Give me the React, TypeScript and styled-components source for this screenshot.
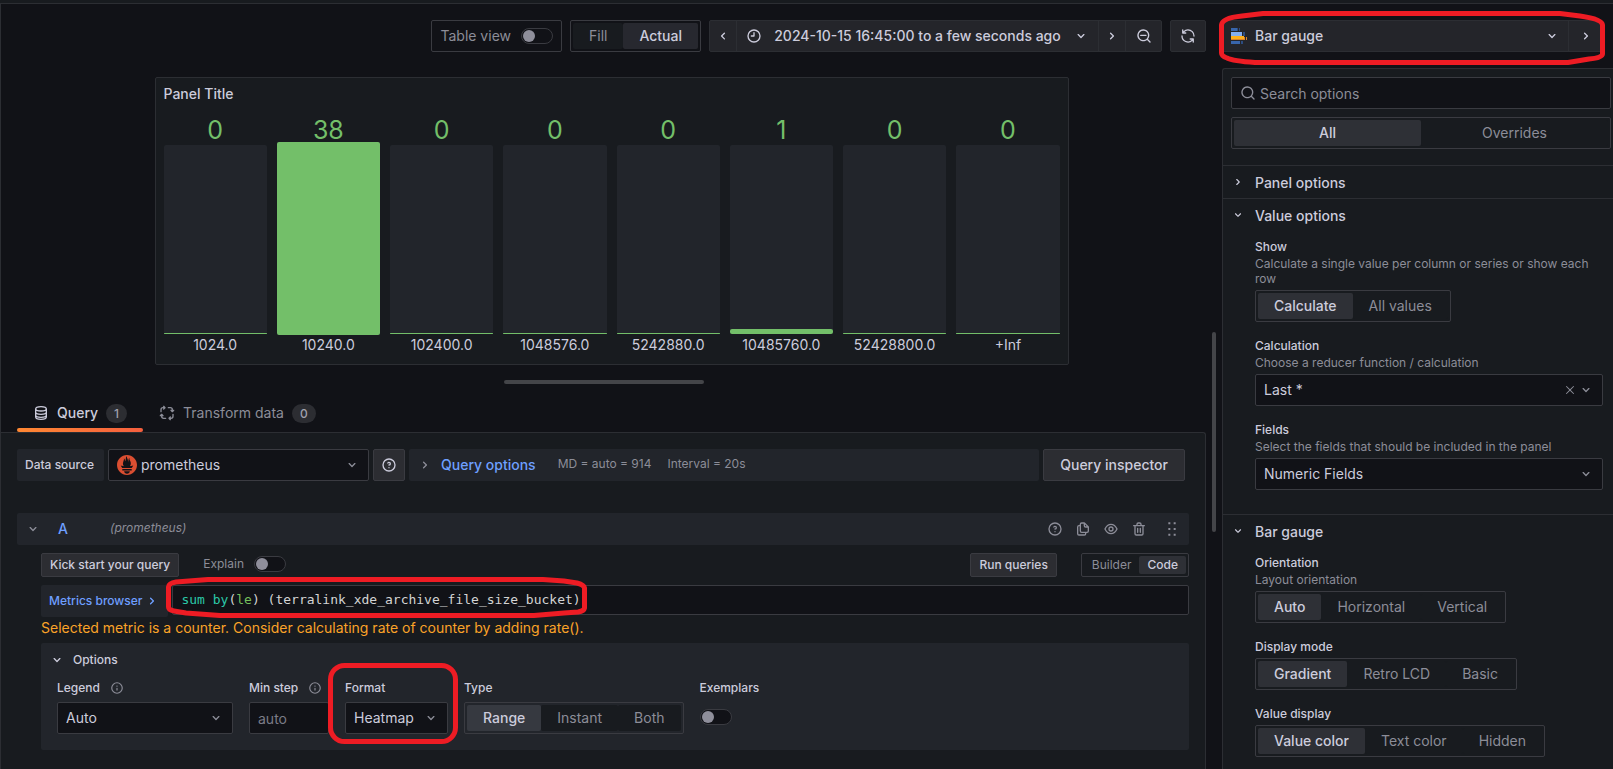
import React, { useState } from 'react';
import styled, { createGlobalStyle, css } from 'styled-components';
import { SiPrometheus } from 'react-icons/si';

const color = {
  canvas: '#111217',
  primary: '#181b1f',
  secondary: '#22252b',
  toolbar: '#24252a',
  line: '#2c2e33',
  border: '#3a3b41',
  text: '#ccccdc',
  muted: '#8c8d98',
  link: '#6e9fff',
  green: '#73bf69',
  fill: 'rgba(204, 204, 220, 0.12)',
  mark: '#ee1c24',
};

const GlobalStyle = createGlobalStyle`
  *, *::before, *::after { box-sizing: border-box; }
  body {
    margin: 0;
    background: ${color.canvas};
    color: ${color.text};
    font-family: Inter, "Liberation Sans", sans-serif;
    font-size: 14px;
    line-height: 22px;
  }
  button, input, select, textarea { font: inherit; color: inherit; margin: 0; }
  button { cursor: pointer; }
`;

/* ---------- icons ---------- */

const paths = {
  down: 'M17,9.17a1,1,0,0,0-1.41,0L12,12.71,8.46,9.17a1,1,0,0,0-1.41,0,1,1,0,0,0,0,1.42l4.24,4.24a1,1,0,0,0,1.42,0L17,10.59A1,1,0,0,0,17,9.17Z',
  right: 'M14.83,11.29,10.59,7.05a1,1,0,0,0-1.42,0,1,1,0,0,0,0,1.41L12.71,12,9.17,15.54a1,1,0,0,0,0,1.41,1,1,0,0,0,.71.29,1,1,0,0,0,.71-.29l4.24-4.24A1,1,0,0,0,14.83,11.29Z',
  left: 'M11.29,12l3.54-3.54a1,1,0,0,0,0-1.41,1,1,0,0,0-1.42,0L9.17,11.29a1,1,0,0,0,0,1.42L13.41,17a1,1,0,0,0,.71.29,1,1,0,0,0,.71-.29,1,1,0,0,0,0-1.41Z',
  clock: 'M12,2A10,10,0,1,0,22,12,10,10,0,0,0,12,2Zm0,18a8,8,0,1,1,8-8A8,8,0,0,1,12,20ZM12,6a1,1,0,0,0-1,1v4H8a1,1,0,0,0,0,2h4a1,1,0,0,0,1-1V7A1,1,0,0,0,12,6Z',
  search: 'M21.71,20.29,18,16.61A9,9,0,1,0,16.61,18l3.68,3.68a1,1,0,0,0,1.42,0A1,1,0,0,0,21.71,20.29ZM11,18a7,7,0,1,1,7-7A7,7,0,0,1,11,18Z',
  zoomOut: 'M21.71,20.29,18,16.61A9,9,0,1,0,16.61,18l3.68,3.68a1,1,0,0,0,1.42,0A1,1,0,0,0,21.71,20.29ZM11,18a7,7,0,1,1,7-7A7,7,0,0,1,11,18Zm4-8H7a1,1,0,0,0,0,2h8a1,1,0,0,0,0-2Z',
  sync: 'M19.91,15.51H15.38a1,1,0,0,0,0,2h2.4A8,8,0,0,1,4,12a1,1,0,0,0-2,0,10,10,0,0,0,16.88,7.23V21a1,1,0,0,0,2,0V16.5A1,1,0,0,0,19.91,15.51ZM12,2A10,10,0,0,0,5.12,4.77V3a1,1,0,0,0-2,0V7.5a1,1,0,0,0,1,1h4.5a1,1,0,0,0,0-2H6.22A8,8,0,0,1,20,12a1,1,0,0,0,2,0A10,10,0,0,0,12,2Z',
  help: 'M11.29,15.29a1.58,1.58,0,0,0-.12.15.76.76,0,0,0-.09.18.64.64,0,0,0-.06.18,1.36,1.36,0,0,0,0,.2.84.84,0,0,0,.08.38.9.9,0,0,0,.54.54.94.94,0,0,0,.76,0,.9.9,0,0,0,.54-.54A1,1,0,0,0,13,16a1,1,0,0,0-.29-.71A1,1,0,0,0,11.29,15.29ZM12,2A10,10,0,1,0,22,12,10,10,0,0,0,12,2Zm0,18a8,8,0,1,1,8-8A8,8,0,0,1,12,20ZM12,7A3,3,0,0,0,9.4,8.5a1,1,0,1,0,1.73,1A1,1,0,0,1,12,9a1,1,0,0,1,0,2,1,1,0,1,0,0,2,3,3,0,0,0,0-6Z',
  info: 'M12,2A10,10,0,1,0,22,12,10,10,0,0,0,12,2Zm0,18a8,8,0,1,1,8-8A8,8,0,0,1,12,20Zm0-8.5a1,1,0,0,0-1,1v3a1,1,0,0,0,2,0v-3A1,1,0,0,0,12,11.5Zm0-4a1.25,1.25,0,1,0,1.25,1.25A1.25,1.25,0,0,0,12,7.5Z',
  copy: 'M21,8.94a1.31,1.31,0,0,0-.06-.27l0-.09a1.07,1.07,0,0,0-.19-.28h0l-6-6h0a1.07,1.07,0,0,0-.28-.19.32.32,0,0,0-.09,0A.88.88,0,0,0,14.05,2H10A3,3,0,0,0,7,5V6H6A3,3,0,0,0,3,9V19a3,3,0,0,0,3,3h8a3,3,0,0,0,3-3V18h1a3,3,0,0,0,3-3V9S21,9,21,8.94ZM15,5.41,17.59,8H16a1,1,0,0,1-1-1ZM15,19a1,1,0,0,1-1,1H6a1,1,0,0,1-1-1V9A1,1,0,0,1,6,8H7v7a3,3,0,0,0,3,3h5Zm4-4a1,1,0,0,1-1,1H10a1,1,0,0,1-1-1V5a1,1,0,0,1,1-1h3V7a3,3,0,0,0,3,3h3Z',
  eye: 'M21.92,11.6C19.9,6.91,16.1,4,12,4S4.1,6.91,2.08,11.6a1,1,0,0,0,0,.8C4.1,17.09,7.9,20,12,20s7.9-2.91,9.92-7.6A1,1,0,0,0,21.92,11.6ZM12,18c-3.17,0-6.17-2.29-7.9-6C5.83,8.29,8.83,6,12,6s6.17,2.29,7.9,6C18.17,15.71,15.17,18,12,18ZM12,8a4,4,0,1,0,4,4A4,4,0,0,0,12,8Zm0,6a2,2,0,1,1,2-2A2,2,0,0,1,12,14Z',
  trash: 'M10,18a1,1,0,0,0,1-1V11a1,1,0,0,0-2,0v6A1,1,0,0,0,10,18ZM20,6H16V5a3,3,0,0,0-3-3H11A3,3,0,0,0,8,5V6H4A1,1,0,0,0,4,8H5V19a3,3,0,0,0,3,3h8a3,3,0,0,0,3-3V8h1a1,1,0,0,0,0-2ZM10,5a1,1,0,0,1,1-1h2a1,1,0,0,1,1,1V6H10Zm7,14a1,1,0,0,1-1,1H8a1,1,0,0,1-1-1V8H17Zm-3-1a1,1,0,0,0,1-1V11a1,1,0,0,0-2,0v6A1,1,0,0,0,14,18Z',
  times: 'M13.41,12l6.3-6.29a1,1,0,1,0-1.42-1.42L12,10.59,5.71,4.29A1,1,0,0,0,4.29,5.71L10.59,12l-6.3,6.29a1,1,0,1,0,1.42,1.42L12,13.41l6.29,6.3a1,1,0,0,0,1.42-1.42Z',
  drag: 'M6.5,2h3v3h-3ZM14.5,2h3v3h-3ZM6.5,10.5h3v3h-3ZM14.5,10.5h3v3h-3ZM6.5,19h3v3h-3ZM14.5,19h3v3h-3Z',
};

const Svg = styled.svg`
  flex: none;
  display: block;
  fill: currentColor;
`;

function Icon({ name, size = 16 }: { name: keyof typeof paths; size?: number }) {
  return (
    <Svg width={size} height={size} viewBox="0 0 24 24" aria-hidden="true">
      <path d={paths[name]} />
    </Svg>
  );
}

const LineSvg = styled(Svg)`
  fill: none;
  stroke: currentColor;
  stroke-width: 2;
  stroke-linecap: round;
  stroke-linejoin: round;
`;

function DatabaseIcon() {
  return (
    <LineSvg width="16" height="16" viewBox="0 0 24 24" aria-hidden="true">
      <path d="M4 6c0-2 3-3.500 8-3.500S20 4 20 6v12c0 2-3 3.500-8 3.500S4 20 4 18ZM4 6c0 2 3 3 8 3s8-1 8-3M4 11c0 2 3 3 8 3s8-1 8-3M4 15.500c0 2 3 3 8 3s8-1 8-3" />
    </LineSvg>
  );
}

function TransformIcon() {
  return (
    <LineSvg width="16" height="16" viewBox="0 0 24 24" aria-hidden="true">
      <path d="M3 10V7a3 3 0 0 1 3-3h3M7 2l2 2-2 2M14 4h3a3 3 0 0 1 3 3v3M22 8l-2 2-2-2M21 14v3a3 3 0 0 1-3 3h-3M17 22l-2-2 2-2M10 20H7a3 3 0 0 1-3-3v-3M2 16l2-2 2 2" />
    </LineSvg>
  );
}

function BarGaugeIcon() {
  return (
    <Svg width="16" height="16" viewBox="0 0 16 16" aria-hidden="true">
      <path fill="#3865ab" d="M0 0h6v3H0zM0 13h9v3H0z" />
      <path fill="#2c4c80" d="M6 0h1v3H6zM8 0h1v3H8zM10 13h2v3h-2zM12 4h2v4h-2z" />
      <path fill="#84aff1" d="M0 4h11v4H0z" />
      <path fill="#ffb01a" d="M0 8h13v4H0z" />
      <path fill="#d9822b" d="M0 11h13v1H0zM13 9h1v3h-1zM15 9h1v3h-1z" />
    </Svg>
  );
}

/* ---------- shared controls ---------- */

const Switch = styled.input.attrs({ type: 'checkbox' })`
  appearance: none;
  flex: none;
  display: flex;
  align-items: center;
  width: 32px;
  height: 16px;
  padding: 0 1px;
  border: 1px solid ${color.border};
  border-radius: 8px;
  background: ${color.canvas};

  &::before {
    content: '';
    width: 12px;
    height: 12px;
    border-radius: 50%;
    background: #8f8f9b;
  }
  &:checked { justify-content: flex-end; }
`;

const Button = styled.button<{ $small?: boolean; $square?: boolean }>`
  flex: none;
  display: inline-flex;
  align-items: center;
  justify-content: center;
  height: ${(p) => (p.$small ? 24 : 32)}px;
  width: ${(p) => (p.$square ? '32px' : 'auto')};
  padding: 0 ${(p) => (p.$square ? 0 : p.$small ? 8 : 16)}px;
  font-size: ${(p) => (p.$small ? 12 : 14)}px;
  font-weight: 500;
  background: #2c2d32;
  border: 1px solid ${color.border};
  border-radius: 2px;
  white-space: nowrap;
`;

const Group = styled.fieldset<{ $wide?: boolean }>`
  display: ${(p) => (p.$wide ? 'flex' : 'inline-flex')};
  flex: none;
  min-width: 0;
  margin: 0;
  padding: 2px;
  border: 1px solid ${color.border};
  border-radius: 2px;
`;

const Choice = styled.label<{ $small?: boolean; $wide?: boolean }>`
  position: relative;
  display: flex;
  align-items: center;
  justify-content: center;
  flex: ${(p) => (p.$wide ? '1 1 0' : 'none')};
  height: ${(p) => (p.$small ? 18 : 26)}px;
  padding: 0 ${(p) => (p.$small ? 8 : 16)}px;
  font-size: ${(p) => (p.$small ? 12 : 14)}px;
  color: ${color.muted};
  background: ${color.primary};
  border-radius: 2px;
  white-space: nowrap;
  cursor: pointer;

  &:has(input:checked) {
    color: ${color.text};
    font-weight: 500;
    background: ${color.fill};
  }
  input {
    appearance: none;
    position: absolute;
    inset: 0;
    cursor: pointer;
  }
`;

interface RadioProps {
  label: string;
  options: string[];
  initial: string;
  small?: boolean;
  wide?: boolean;
}

function RadioGroup({ label, options, initial, small, wide }: RadioProps) {
  const [value, setValue] = useState(initial);
  return (
    <Group $wide={wide} aria-label={label}>
      {options.map((option) => (
        <Choice key={option} $small={small} $wide={wide}>
          <input type="radio" name={label} checked={value === option} onChange={() => setValue(option)} />
          {option}
        </Choice>
      ))}
    </Group>
  );
}

const SelectBox = styled.div<{ $width?: number }>`
  display: flex;
  align-items: center;
  gap: 4px;
  height: 32px;
  width: ${(p) => (p.$width ? `${p.$width}px` : '100%')};
  padding: 0 8px;
  color: ${color.muted};
  background: ${color.canvas};
  border: 1px solid ${color.border};
  border-radius: 2px;

  select {
    appearance: none;
    flex: 1;
    min-width: 0;
    padding: 0;
    border: 0;
    outline: 0;
    background: transparent;
    color: ${color.text};
  }
`;

const ClearButton = styled.button`
  display: flex;
  margin-right: -2px;
  padding: 0;
  border: 0;
  background: none;
  color: ${color.muted};
`;

interface SelectProps {
  id: string;
  value: string;
  width?: number;
  clearable?: boolean;
  icon?: React.ReactNode;
}

function Select({ id, value, width, clearable, icon }: SelectProps) {
  return (
    <SelectBox $width={width}>
      {icon}
      <select id={id}>
        <option>{value}</option>
      </select>
      {clearable && (
        <ClearButton aria-label="Clear value">
          <Icon name="times" size={12} />
        </ClearButton>
      )}
      <Icon name="down" />
    </SelectBox>
  );
}

/* Hand-drawn marker line around the parts to notice. */
const Marker = styled.svg<{ $inset: string }>`
  position: absolute;
  inset: ${(p) => p.$inset};
  overflow: visible;
  fill: none;
  stroke: ${color.mark};
  stroke-width: 5;
  stroke-linejoin: round;
  pointer-events: none;
`;

/* ---------- page frame ---------- */

const Page = styled.div`
  display: flex;
  flex-direction: column;
  height: 100vh;
  overflow: hidden;
`;

const TopStrip = styled.div`
  flex: none;
  height: 4px;
  background: ${color.primary};
  border-bottom: 1px solid ${color.line};
`;

const Workspace = styled.div`
  flex: 1;
  min-height: 0;
  display: flex;
  border-left: 1px solid ${color.line};
`;

const LeftPane = styled.main`
  flex: 1;
  min-width: 0;
  display: flex;
  flex-direction: column;
`;

const Splitter = styled.div<{ $vertical?: boolean }>`
  flex: none;
  display: flex;
  align-items: center;
  justify-content: center;
  ${(p) => (p.$vertical ? 'width: 16px; padding-top: 90px;' : 'height: 16px;')}

  &::before {
    content: '';
    border-radius: 4px;
    background: #444549;
    ${(p) => (p.$vertical ? 'width: 4px; height: 200px;' : 'width: 200px; height: 4px;')}
  }
`;

/* ---------- toolbar ---------- */

const Toolbar = styled.div`
  flex: none;
  display: flex;
  justify-content: flex-end;
  gap: 8px;
  padding: 16px 0 16px 16px;
`;

const TableView = styled.label`
  display: flex;
  align-items: center;
  gap: 10px;
  height: 32px;
  padding: 0 8px;
  color: ${color.muted};
  border: 1px solid ${color.border};
  border-radius: 2px;
  white-space: nowrap;
`;

const ButtonRow = styled.div`
  display: flex;
  height: 32px;
  background: ${color.toolbar};
  border: 1px solid ${color.line};
  border-radius: 2px;
`;

const ToolButton = styled.button<{ $width?: number }>`
  display: flex;
  align-items: center;
  justify-content: center;
  gap: 12px;
  width: ${(p) => (p.$width ? `${p.$width}px` : 'auto')};
  padding: 0 ${(p) => (p.$width ? 0 : 8)}px;
  border: 0;
  background: none;
  font-weight: 500;
  white-space: nowrap;

  & + & { border-left: 1px solid ${color.line}; }
`;

/* ---------- visualization ---------- */

const VizArea = styled.div`
  flex: none;
  display: flex;
  justify-content: center;
  padding: 9px 0 9px 16px;
`;

const VizPanel = styled.section`
  width: 100%;
  max-width: 914px;
  padding: 0 8px 9px;
  background: ${color.primary};
  border: 1px solid ${color.line};
  border-radius: 2px;
`;

const PanelTitle = styled.h2`
  margin: 0;
  font-size: 14px;
  font-weight: 500;
  line-height: 32px;
`;

const Bars = styled.div`
  display: grid;
  grid-template-columns: repeat(8, 1fr);
  gap: 10px;
  padding-top: 8px;
  text-align: center;
`;

const BarValue = styled.div`
  font-size: 25px;
  line-height: 24px;
  color: ${color.green};
`;

const BarSlot = styled.div<{ $full: boolean }>`
  height: 193px;
  padding: ${(p) => (p.$full ? '0' : '3px 0 1px')};
`;

const Track = styled.div`
  display: flex;
  flex-direction: column;
  justify-content: flex-end;
  height: 100%;
  background: ${color.secondary};
  border-radius: 2px;
`;

const Fill = styled.div`
  min-height: 1px;
  background: ${color.green};
  border-radius: 2px;
`;

const BarLabel = styled.div`
  line-height: 20px;
`;

const buckets = [
  { label: '1024.0', value: 0 },
  { label: '10240.0', value: 38 },
  { label: '102400.0', value: 0 },
  { label: '1048576.0', value: 0 },
  { label: '5242880.0', value: 0 },
  { label: '10485760.0', value: 1 },
  { label: '52428800.0', value: 0 },
  { label: '+Inf', value: 0 },
];
const maxValue = 38;

/* ---------- query editor ---------- */

const Tabs = styled.div`
  flex: none;
  display: flex;
  height: 42px;
  padding: 4px 0 0 16px;
`;

const Tab = styled.button<{ $active?: boolean }>`
  position: relative;
  display: flex;
  align-items: center;
  gap: 8px;
  padding: 0 16px;
  border: 0;
  background: none;
  font-weight: ${(p) => (p.$active ? 500 : 400)};
  color: ${(p) => (p.$active ? color.text : color.muted)};

  ${(p) =>
    p.$active &&
    css`
      &::after {
        content: '';
        position: absolute;
        left: 0;
        right: 0;
        bottom: 0;
        height: 4px;
        border-radius: 2px;
        background: linear-gradient(270deg, #f55f3e 0%, #ff8833 100%);
      }
    `}
`;

const Counter = styled.span`
  padding: 0 8px;
  border-radius: 10px;
  background: #2c2d32;
  font-size: 12px;
  line-height: 19px;
  font-weight: 500;
  color: #a0a0ad;
`;

const QueryPane = styled.section`
  flex: 1;
  min-height: 0;
  margin-left: -1px;
  padding: 16px 16px 0;
  background: ${color.primary};
  border: 1px solid ${color.line};
  border-bottom: 0;
  border-radius: 0 3px 0 0;
`;

const SourceRow = styled.div`
  display: flex;
  gap: 4px;
  padding-right: 4px;
  margin-bottom: 32px;
`;

const InlineLabel = styled.label`
  flex: none;
  min-width: 87px;
  padding: 0 8px;
  line-height: 32px;
  font-size: 12px;
  font-weight: 500;
  background: ${color.secondary};
  border-radius: 2px;
`;

const SourceSelect = styled.div`
  flex: none;
  width: 261px;
`;

const OptionsSummary = styled.div`
  flex: 1;
  min-width: 0;
  display: flex;
  align-items: center;
  padding: 0 8px;
  color: ${color.muted};
  font-size: 12px;
  background: ${color.secondary};
  border-radius: 2px;
  white-space: nowrap;

  span { margin-left: 16px; padding-bottom: 2px; }
`;

const SummaryButton = styled.button`
  display: flex;
  align-items: center;
  gap: 8px;
  margin-right: 6px;
  padding: 0;
  border: 0;
  background: none;
  color: ${color.muted};
  font-size: 14px;
  font-weight: 500;

  b { font-weight: 500; color: ${color.link}; }
`;

const QueryHeader = styled.header`
  display: flex;
  align-items: center;
  height: 32px;
  padding: 0 9px 0 8px;
  color: ${color.muted};
  background: ${color.secondary};
  border-radius: 2px;
`;

const RefId = styled.button`
  padding: 0;
  width: 32px;
  margin-left: 17px;
  border: 0;
  background: none;
  text-align: left;
  font-weight: 500;
  color: ${color.link};
`;

const SourceName = styled.em`
  flex: 1;
  margin-left: 20px;
  padding-bottom: 2px;
  font-size: 12px;
`;

const IconButton = styled.button<{ $gap?: boolean }>`
  display: flex;
  margin-left: ${(p) => (p.$gap ? 17 : 12)}px;
  padding: 0;
  border: 0;
  background: none;
  color: inherit;

  &:first-child { margin-left: 0; }
`;

const QueryBody = styled.div`
  padding: 8px 0 0 24px;
`;

const ActionRow = styled.div`
  display: flex;
  align-items: center;
  gap: 24px;
  margin-bottom: 8px;
`;

const Explain = styled.label`
  flex: 1;
  display: flex;
  align-items: center;
  gap: 10px;
  padding-bottom: 3px;
  font-size: 12px;
  line-height: 16px;
  color: ${color.muted};
`;

const EditorRow = styled.div`
  display: flex;
  align-items: flex-start;
  gap: 4px;
`;

const BrowserButton = styled.button`
  flex: none;
  display: flex;
  align-items: center;
  gap: 2px;
  height: 32px;
  padding: 0 8px;
  border: 0;
  border-radius: 2px;
  font-size: 12px;
  font-weight: 500;
  background: ${color.secondary};
  color: ${color.link};
`;

const Editor = styled.div`
  position: relative;
  flex: 1;
  min-width: 0;
  height: 30px;
  border: 1px solid ${color.border};
  border-radius: 2px;
  background: ${color.canvas};
  font: 13px/28px "DejaVu Sans Mono", "Liberation Mono", monospace;
`;

const Highlight = styled.code`
  display: block;
  padding: 0 8px;
  font: inherit;
  color: #d4d4d4;
  white-space: pre;
`;

const Token = styled.span<{ $kind: 'keyword' | 'label' }>`
  color: ${(p) => (p.$kind === 'keyword' ? '#2bc8a8' : '#74bf5c')};
`;

const EditorInput = styled.input`
  position: absolute;
  inset: 0;
  width: 100%;
  padding: 0 8px;
  border: 0;
  outline: 0;
  background: transparent;
`;

function colorize(expression: string) {
  return expression.split(/\b(sum|by|le)\b/).map((part, i) =>
    i % 2 ? (
      <Token key={i} $kind={part === 'le' ? 'label' : 'keyword'}>
        {part}
      </Token>
    ) : (
      part
    ),
  );
}

const Hint = styled.div`
  margin-bottom: 4px;
  color: #fba328;
`;

const OptionsBox = styled.div`
  padding: 8px 16px 16px;
  background: ${color.secondary};
  border-radius: 2px;
`;

const OptionsToggle = styled.button`
  display: flex;
  align-items: center;
  gap: 8px;
  margin: 0 0 10px -8px;
  padding: 0;
  border: 0;
  background: none;
  font-size: 12px;
  font-weight: 500;
  line-height: 18px;
`;

const OptionFields = styled.div`
  display: flex;
  flex-wrap: wrap;
  gap: 16px;
`;

const OptionField = styled.div`
  position: relative;
`;

const OptionLabel = styled.label`
  display: flex;
  align-items: center;
  gap: 10px;
  margin-bottom: 5px;
  font-size: 12px;
  font-weight: 500;
  line-height: 18px;

  svg { color: ${color.muted}; }
`;

const StepInput = styled.input`
  display: block;
  width: 80px;
  height: 32px;
  padding: 0 8px;
  border: 1px solid ${color.border};
  border-radius: 2px;
  background: ${color.canvas};

  &::placeholder { color: #7b7c87; opacity: 1; }
`;

const SwitchCell = styled.div`
  display: flex;
  padding-top: 7px;
`;

/* ---------- options pane ---------- */

const RightPane = styled.aside`
  flex: none;
  width: 391px;
  display: flex;
  flex-direction: column;
`;

const Picker = styled.div`
  position: relative;
  flex: none;
  margin: 16px 10px 16px 0;
`;

const PickerRow = styled(ButtonRow)`
  ${ToolButton}:first-child {
    flex: 1;
    gap: 8px;
    text-align: left;
    span { flex: 1; }
  }
`;

const OptionsPane = styled.div`
  flex: 1;
  min-height: 0;
  overflow: hidden;
  background: ${color.primary};
  border: 1px solid ${color.line};
  border-width: 1px 0 0 1px;
  border-radius: 3px 0 0 0;
`;

const Filters = styled.div`
  display: flex;
  flex-direction: column;
  gap: 8px;
  padding: 8px 2px 16px 8px;
`;

const SearchBox = styled.label`
  display: flex;
  align-items: center;
  gap: 4px;
  height: 32px;
  padding: 0 8px;
  color: ${color.muted};
  background: ${color.canvas};
  border: 1px solid ${color.border};
  border-radius: 2px;

  input {
    flex: 1;
    min-width: 0;
    padding: 2px 0 0;
    border: 0;
    outline: 0;
    background: transparent;
  }
  input::placeholder { color: ${color.muted}; opacity: 1; }
`;

const Section = styled.section`
  border-top: 1px solid ${color.line};
`;

const SectionHeader = styled.button`
  display: flex;
  align-items: center;
  gap: 10px;
  width: 100%;
  height: 32px;
  padding: 2px 8px 0;
  border: 0;
  background: none;
  font-weight: 500;

  svg { margin-bottom: 2px; }
`;

const SectionBody = styled.div`
  display: flex;
  flex-direction: column;
  gap: 16px;
  padding: 8px 10px 24px 32px;
`;

const FieldLabel = styled.label`
  display: block;
  margin-bottom: 4px;
  font-size: 12px;
  font-weight: 500;
  line-height: 15px;
`;

const Description = styled.span`
  display: block;
  margin-top: 2px;
  font-weight: 400;
  color: ${color.muted};
`;

function Field({ id, label, description, children }: { id?: string; label: string; description?: string; children: React.ReactNode }) {
  return (
    <div>
      <FieldLabel as={id ? 'label' : 'div'} htmlFor={id}>
        {label}
        {description && <Description>{description}</Description>}
      </FieldLabel>
      {children}
    </div>
  );
}

export default function App() {
  const [expression, setExpression] = useState('sum by(le) (terralink_xde_archive_file_size_bucket)');
  return (
    <Page>
      <GlobalStyle />
      <TopStrip />
      <Workspace>
        <LeftPane>
          <Toolbar>
            <TableView>
              Table view
              <Switch />
            </TableView>
            <RadioGroup label="Panel size" options={['Fill', 'Actual']} initial="Actual" />
            <ButtonRow>
              <ToolButton $width={26} aria-label="Move time range backwards">
                <Icon name="left" />
              </ToolButton>
              <ToolButton $width={362}>
                <Icon name="clock" />
                2024-10-15 16:45:00 to a few seconds ago
                <Icon name="down" />
              </ToolButton>
              <ToolButton $width={27} aria-label="Move time range forwards">
                <Icon name="right" />
              </ToolButton>
              <ToolButton $width={36} aria-label="Zoom out time range">
                <Icon name="zoomOut" />
              </ToolButton>
            </ButtonRow>
            <ButtonRow>
              <ToolButton $width={34} aria-label="Refresh">
                <Icon name="sync" />
              </ToolButton>
            </ButtonRow>
          </Toolbar>

          <VizArea>
            <VizPanel>
              <PanelTitle>Panel Title</PanelTitle>
              <Bars>
                {buckets.map((b) => (
                  <div key={b.label}>
                    <BarValue>{b.value}</BarValue>
                    <BarSlot $full={b.value === maxValue}>
                      <Track>
                        <Fill style={{ height: `${(b.value / maxValue) * 100}%` }} />
                      </Track>
                    </BarSlot>
                    <BarLabel>{b.label}</BarLabel>
                  </div>
                ))}
              </Bars>
            </VizPanel>
          </VizArea>

          <Splitter />

          <Tabs>
            <Tab $active>
              <DatabaseIcon />
              Query
              <Counter>1</Counter>
            </Tab>
            <Tab>
              <TransformIcon />
              Transform data
              <Counter>0</Counter>
            </Tab>
          </Tabs>

          <QueryPane>
            <SourceRow>
              <InlineLabel htmlFor="source">Data source</InlineLabel>
              <SourceSelect>
                <Select id="source" value="prometheus" icon={<SiPrometheus size={20} color="#da4e31" />} />
              </SourceSelect>
              <Button $square aria-label="Data source help">
                <Icon name="help" />
              </Button>
              <OptionsSummary>
                <SummaryButton>
                  <Icon name="right" />
                  <b>Query options</b>
                </SummaryButton>
                <span>MD = auto = 914</span>
                <span>Interval = 20s</span>
              </OptionsSummary>
              <Button>Query inspector</Button>
            </SourceRow>

            <QueryHeader>
              <IconButton aria-label="Collapse query">
                <Icon name="down" />
              </IconButton>
              <RefId>A</RefId>
              <SourceName>(prometheus)</SourceName>
              <IconButton aria-label="Help"><Icon name="help" /></IconButton>
              <IconButton aria-label="Duplicate query"><Icon name="copy" /></IconButton>
              <IconButton aria-label="Hide response"><Icon name="eye" /></IconButton>
              <IconButton aria-label="Remove query"><Icon name="trash" /></IconButton>
              <IconButton $gap aria-label="Drag to reorder"><Icon name="drag" /></IconButton>
            </QueryHeader>

            <QueryBody>
              <ActionRow>
                <Button $small>Kick start your query</Button>
                <Explain>
                  Explain
                  <Switch />
                </Explain>
                <Button $small>Run queries</Button>
                <RadioGroup label="Editor mode" options={['Builder', 'Code']} initial="Code" small />
              </ActionRow>

              <EditorRow>
                <BrowserButton>
                  Metrics browser
                  <Icon name="right" />
                </BrowserButton>
                <Editor>
                  <Highlight>{colorize(expression)}</Highlight>
                  {/* Catches keystrokes; the coloured line above shows the text. */}
                  <EditorInput
                    aria-label="Query expression"
                    value=""
                    onChange={(e) => setExpression(expression + e.target.value)}
                    onKeyDown={(e) => e.key === 'Backspace' && setExpression(expression.slice(0, -1))}
                  />
                  <Marker $inset="-9px auto auto -7px" width="421" height="41" viewBox="0 0 421 41" aria-hidden="true">
                    <path d="M42 2.5H377L398 4L411 6Q418 8 418.500 11V31Q418 34 412 35L398 36L368 38.500H54L20 36L8 34Q2.500 33 2.500 30V10Q3 6 10 5Z" />
                  </Marker>
                </Editor>
              </EditorRow>

              <Hint>Selected metric is a counter. Consider calculating rate of counter by adding rate().</Hint>

              <OptionsBox>
                <OptionsToggle>
                  <Icon name="down" />
                  Options
                </OptionsToggle>
                <OptionFields>
                  <OptionField>
                    <OptionLabel htmlFor="legend">
                      Legend
                      <Icon name="info" size={14} />
                    </OptionLabel>
                    <Select id="legend" value="Auto" width={176} />
                  </OptionField>
                  <OptionField>
                    <OptionLabel htmlFor="step">
                      Min step
                      <Icon name="info" size={14} />
                    </OptionLabel>
                    <StepInput id="step" placeholder="auto" />
                  </OptionField>
                  <OptionField>
                    <OptionLabel htmlFor="format">Format</OptionLabel>
                    <Select id="format" value="Heatmap" width={103} />
                    <Marker $inset="-16px auto auto -17px" width="131" height="81" viewBox="0 0 131 81" aria-hidden="true">
                      <rect x="2.500" y="2.500" width="125" height="76" rx="14" />
                    </Marker>
                  </OptionField>
                  <OptionField>
                    <OptionLabel as="div">Type</OptionLabel>
                    <RadioGroup label="Type" options={['Range', 'Instant', 'Both']} initial="Range" />
                  </OptionField>
                  <OptionField>
                    <OptionLabel htmlFor="exemplars">Exemplars</OptionLabel>
                    <SwitchCell>
                      <Switch id="exemplars" />
                    </SwitchCell>
                  </OptionField>
                </OptionFields>
              </OptionsBox>
            </QueryBody>
          </QueryPane>
        </LeftPane>

        <Splitter $vertical />

        <RightPane>
          <Picker>
            <PickerRow>
              <ToolButton>
                <BarGaugeIcon />
                <span>Bar gauge</span>
                <Icon name="down" />
              </ToolButton>
              <ToolButton $width={34} aria-label="Hide options pane">
                <Icon name="right" />
              </ToolButton>
            </PickerRow>
            <Marker $inset="-9px auto auto -3px" width="387" height="54" viewBox="0 0 387 54" aria-hidden="true">
              <path d="M44 2.500H341L361 5Q383 8 383.500 14V43Q383 47 370 48L349 51.500H36Q14 50 8 47Q2.500 45 2.500 42V14Q3 7 23 5Z" />
            </Marker>
          </Picker>

          <OptionsPane>
            <Filters>
              <SearchBox>
                <Icon name="search" />
                <input type="text" placeholder="Search options" aria-label="Search options" />
              </SearchBox>
              <RadioGroup label="Option filter" options={['All', 'Overrides']} initial="All" wide />
            </Filters>

            <Section>
              <SectionHeader>
                <Icon name="right" size={14} />
                Panel options
              </SectionHeader>
            </Section>

            <Section>
              <SectionHeader>
                <Icon name="down" size={14} />
                Value options
              </SectionHeader>
              <SectionBody>
                <Field label="Show" description="Calculate a single value per column or series or show each row">
                  <RadioGroup label="Show" options={['Calculate', 'All values']} initial="Calculate" />
                </Field>
                <Field id="calculation" label="Calculation" description="Choose a reducer function / calculation">
                  <Select id="calculation" value="Last *" clearable />
                </Field>
                <Field id="fields" label="Fields" description="Select the fields that should be included in the panel">
                  <Select id="fields" value="Numeric Fields" />
                </Field>
              </SectionBody>
            </Section>

            <Section>
              <SectionHeader>
                <Icon name="down" size={14} />
                Bar gauge
              </SectionHeader>
              <SectionBody>
                <Field label="Orientation" description="Layout orientation">
                  <RadioGroup label="Orientation" options={['Auto', 'Horizontal', 'Vertical']} initial="Auto" />
                </Field>
                <Field label="Display mode">
                  <RadioGroup label="Display mode" options={['Gradient', 'Retro LCD', 'Basic']} initial="Gradient" />
                </Field>
                <Field label="Value display">
                  <RadioGroup label="Value display" options={['Value color', 'Text color', 'Hidden']} initial="Value color" />
                </Field>
              </SectionBody>
            </Section>
          </OptionsPane>
        </RightPane>
      </Workspace>
    </Page>
  );
}
